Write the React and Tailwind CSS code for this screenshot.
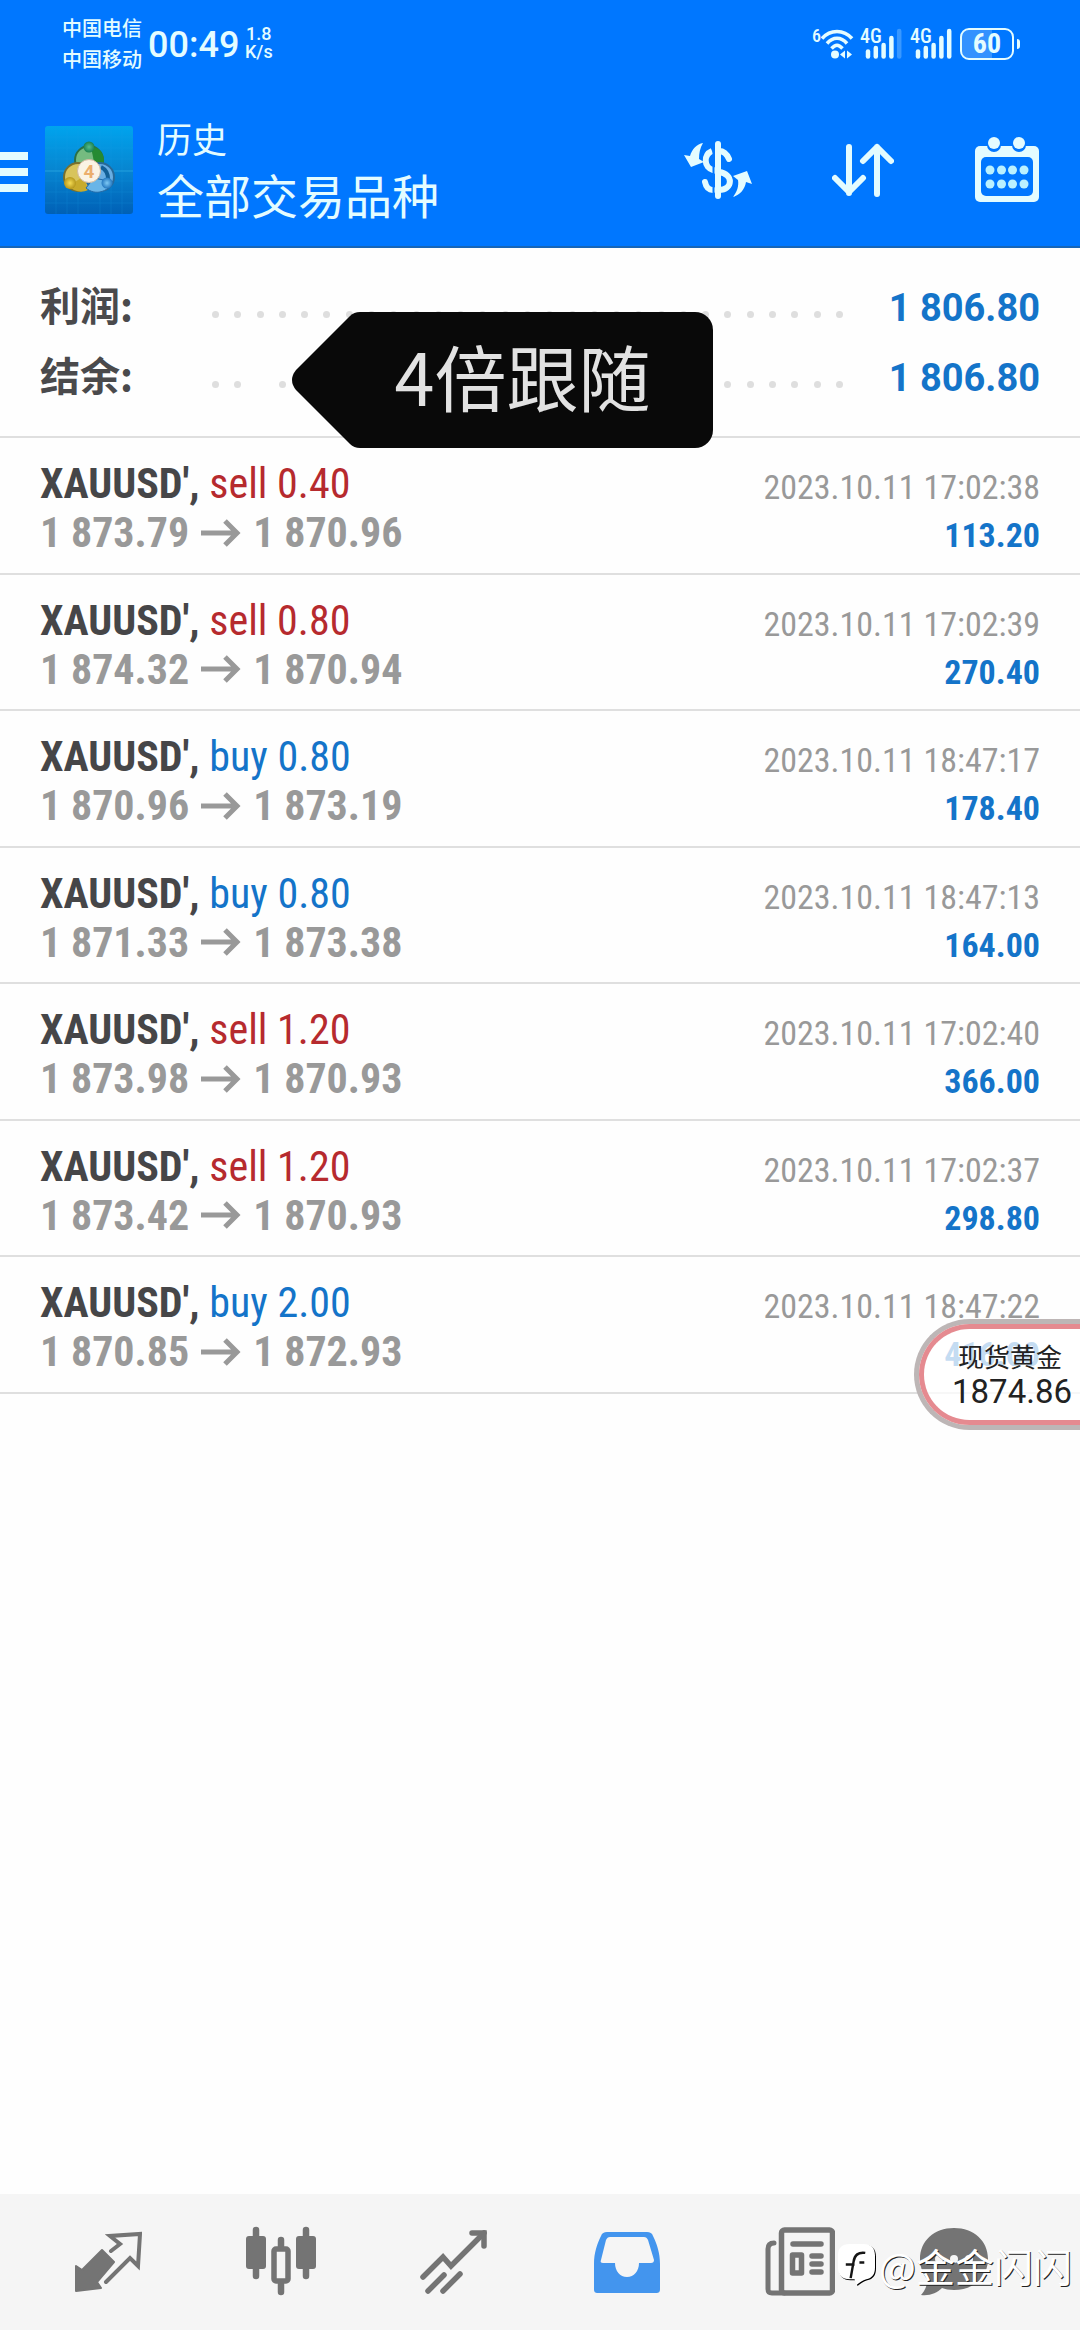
import React, { useState } from 'react';

const orders = [
  { id: 1, symbol: "XAUUSD'", type: 'sell', volume: '0.40', open: '1 873.79', close: '1 870.96', time: '2023.10.11 17:02:38', profit: '113.20' },
  { id: 2, symbol: "XAUUSD'", type: 'sell', volume: '0.80', open: '1 874.32', close: '1 870.94', time: '2023.10.11 17:02:39', profit: '270.40' },
  { id: 3, symbol: "XAUUSD'", type: 'buy', volume: '0.80', open: '1 870.96', close: '1 873.19', time: '2023.10.11 18:47:17', profit: '178.40' },
  { id: 4, symbol: "XAUUSD'", type: 'buy', volume: '0.80', open: '1 871.33', close: '1 873.38', time: '2023.10.11 18:47:13', profit: '164.00' },
  { id: 5, symbol: "XAUUSD'", type: 'sell', volume: '1.20', open: '1 873.98', close: '1 870.93', time: '2023.10.11 17:02:40', profit: '366.00' },
  { id: 6, symbol: "XAUUSD'", type: 'sell', volume: '1.20', open: '1 873.42', close: '1 870.93', time: '2023.10.11 17:02:37', profit: '298.80' },
  { id: 7, symbol: "XAUUSD'", type: 'buy', volume: '2.00', open: '1 870.85', close: '1 872.93', time: '2023.10.11 18:47:22', profit: '416.00' },
];

const WifiIcon = () => (
  <svg width="33" height="32" viewBox="0 0 33 32" fill="none" stroke="currentColor" strokeWidth="3.5">
    <path d="M1 10.5C9 1 23 1 31 10.5" />
    <path d="M6 15.5c6-7 14-7 20 0" />
    <path d="M10.500 20.500c4-4.500 7-4.500 11 0" />
    <circle cx="14" cy="26.500" r="4" fill="currentColor" stroke="none" />
    <path d="M24 22.500v8l-5-4zM26 22.500v8l5-4z" fill="currentColor" stroke="none" />
  </svg>
);

const SignalIcon = ({ level }) => (
  <div className="relative w-[42px] h-8">
    <span className="absolute left-0 top-0 text-[20px] leading-4 font-['Roboto_Condensed',sans-serif] font-medium">4G</span>
    <svg className="w-full h-full" viewBox="0 0 42 32" stroke="currentColor" strokeWidth="4.500" strokeLinecap="round">
      {[23.500, 20, 17, 10, 3].map((y, i) => (
        <path key={y} d={`M${8 + i * 7.800} 28.500V${y}`} opacity={i < level ? 1 : 0.25} />
      ))}
    </svg>
  </div>
);

const BatteryIcon = () => (
  <div className="flex items-center">
    <div className="relative flex items-center justify-center w-[54px] h-8 border-2 border-current rounded-[9px] overflow-hidden">
      <div className="absolute left-0 inset-y-0 w-3/5 bg-white/20" />
      <span className="relative text-[28px] leading-none font-bold">60</span>
    </div>
    <div className="ml-[3px] w-[3px] h-[10px] rounded-r bg-current" />
  </div>
);

const AppLogo = () => (
  <svg width="88" height="88" viewBox="0 0 88 88">
    <defs>
      <linearGradient id="logoBg" x1="0" y1="0" x2="0" y2="1">
        <stop offset="0" stopColor="#00a4ee" />
        <stop offset="0.5" stopColor="#0785d0" />
        <stop offset="1" stopColor="#0060b6" />
      </linearGradient>
      <radialGradient id="logoGreen">
        <stop offset="0" stopColor="#58bd8c" />
        <stop offset="1" stopColor="#1b8050" />
      </radialGradient>
      <radialGradient id="logoGold">
        <stop offset="0" stopColor="#f5dc55" />
        <stop offset="1" stopColor="#b5971c" />
      </radialGradient>
      <radialGradient id="logoBlue">
        <stop offset="0" stopColor="#7ec9f5" />
        <stop offset="1" stopColor="#2478c0" />
      </radialGradient>
    </defs>
    <rect width="88" height="88" rx="3" fill="url(#logoBg)" />
    <path d="M0 11h88M0 22h88M0 33h88M0 55h88M0 66h88M0 77h88M11 0v88M22 0v88M33 0v88M55 0v88M66 0v88M77 0v88" stroke="#1a9ee4" strokeWidth="0.500" opacity="0.400" />
    <path d="M0 45h88" stroke="#39b4e8" opacity="0.600" />
    <circle cx="44" cy="34" r="14" fill="#75bb80" stroke="#2b7047" strokeWidth="2" />
    <path d="M46 21c10 0 15 9 12 20l-8 0z" fill="#258a32" />
    <circle cx="33" cy="51" r="14" fill="#d8c45c" stroke="#79702e" strokeWidth="2" />
    <path d="M24 60l15-10 4 14c-6 3-14 2-19-4z" fill="#c8ab2c" />
    <circle cx="55" cy="51" r="14" fill="#69aee3" stroke="#286998" strokeWidth="2" />
    <path d="M41 62l8-10 19 4c-5 10-18 14-27 6z" fill="#69b5e8" stroke="#246aa8" />
    <path d="M56 41c4 2 7 6 7 12" fill="none" stroke="#125f96" strokeWidth="4" />
    <circle cx="44" cy="21" r="5.500" fill="url(#logoGreen)" />
    <circle cx="25" cy="57" r="6" fill="url(#logoGold)" />
    <circle cx="62" cy="57" r="5.500" fill="url(#logoBlue)" />
    <circle cx="44" cy="45" r="11.500" fill="#faf3e4" stroke="#d1b9a0" />
    <text x="44" y="52" textAnchor="middle" fontSize="19" fontWeight="700" fontFamily="Roboto, sans-serif" fill="#ebae6c">4</text>
  </svg>
);

const DollarIcon = () => (
  <svg width="68" height="60" viewBox="0 0 68 60" fill="none" stroke="currentColor">
    <path d="M34 4v52" strokeWidth="6" strokeLinecap="round" />
    <path d="M45 19C42 12 38 11 35 11" strokeWidth="6" strokeLinecap="round" />
    <path d="M28 11c-9 4-8 17 1 19l6 2c15 2 14 18 0 18" strokeWidth="6" />
    <path d="M21 42c1 5 4 8 8 8" strokeWidth="6" strokeLinecap="round" />
    <path d="M29.500 5v50" stroke="#0077ff" strokeWidth="2" />
    <path d="M19 3C13 4 8 9 6 16L0 15l7 12 13-5-5-3c0-6 1-11 4-16z" fill="currentColor" stroke="none" />
    <path d="M49 57c7-2 12-8 13-15l6 2-5-13-14 5 5 4c1 6-1 12-5 17z" fill="currentColor" stroke="none" />
  </svg>
);

const SortIcon = () => (
  <svg width="62" height="54" viewBox="0 0 62 54" fill="none" stroke="currentColor" strokeWidth="6" strokeLinecap="round" strokeLinejoin="round">
    <path d="M17 4v46M3 35l14 14 14-14" />
    <path d="M45 51V4M31 18L45 4l14 14" />
  </svg>
);

const CalendarIcon = () => (
  <svg width="66" height="66" viewBox="0 0 66 66">
    <rect x="1" y="9" width="64" height="56" rx="5" fill="currentColor" />
    <rect x="7" y="20" width="52" height="39" rx="5" fill="#0077ff" />
    <path d="M13 6v2a7 7 0 0 0 14 0V6zM38 6v2a7 7 0 0 0 14 0V6z" fill="#0077ff" />
    <circle cx="20" cy="6" r="6" fill="currentColor" />
    <circle cx="45" cy="6" r="6" fill="currentColor" />
    {[16, 27.500, 38.500, 50].map((x) => (
      <g key={x} fill="#baf1ff">
        <circle cx={x} cy="33" r="4.500" />
        <circle cx={x} cy="47" r="4.500" />
      </g>
    ))}
  </svg>
);

const QuotesIcon = () => (
  <svg width="68" height="70" viewBox="0 0 68 70" fill="none" stroke="currentColor">
    <path d="M28 24l12 12-17 20 4 6-25 3V40l6 4z" fill="currentColor" strokeWidth="2" strokeLinejoin="round" />
    <path d="M37 25l9-7-10-8 30-2-2 32-8-8-24 24" strokeWidth="4" strokeLinecap="round" />
  </svg>
);

const ChartIcon = () => (
  <svg width="70" height="70" viewBox="0 0 70 70" fill="none" stroke="currentColor">
    <path d="M10 4v46M35 14v10M35 56v10M60 4v46" strokeWidth="6.500" strokeLinecap="round" />
    <rect x="0" y="10" width="20" height="33" rx="3" fill="currentColor" stroke="none" />
    <rect x="50" y="10" width="20" height="33" rx="3" fill="currentColor" stroke="none" />
    <rect x="28" y="23" width="14" height="32" rx="2" fill="#f5f5f5" strokeWidth="5.500" />
  </svg>
);

const TradeIcon = () => (
  <svg width="68" height="70" viewBox="0 0 68 70" fill="none" stroke="currentColor" strokeWidth="5.500" strokeLinecap="round">
    <path d="M3 51l20-20 8 9L64 7" />
    <path d="M52 7h12v13" />
    <path d="M8 65l16-16M23 65l17-17" />
  </svg>
);

const HistoryIcon = () => (
  <svg width="68" height="70" viewBox="0 0 68 70">
    <path d="M14 6h40c3 0 5 1 6 4 4 8 7 17 7 28v25c0 3-1 4-4 4H5c-3 0-4-1-4-4V38c0-11 3-20 7-28 1-3 3-4 6-4z" fill="currentColor" />
    <path d="M17 11h34c2 0 3 1 4 3l6 20c0 2-1 3-3 3H46c0 8-5 14-12 14s-12-6-12-14H10c-2 0-3-1-2-3l5-20c1-2 2-3 4-3z" fill="#f5f5f5" />
  </svg>
);

const NewsIcon = () => (
  <svg width="70" height="70" viewBox="0 0 70 70" fill="none" stroke="currentColor" strokeLinecap="round">
    <rect x="16.500" y="4" width="51" height="63" rx="3" strokeWidth="5.500" />
    <path d="M9 17c-4 0-6 2-6 6v40c0 3 1 4 4 4h12" strokeWidth="5" />
    <path d="M28 18h28M47 30h9M47 38h9M47 46h9" strokeWidth="5.500" />
    <rect x="27.500" y="29" width="9" height="18" strokeWidth="5.500" strokeLinejoin="round" />
  </svg>
);

const ChatIcon = () => (
  <svg width="70" height="70" viewBox="0 0 70 70">
    <path d="M35 2c20 0 34 13 34 31S55 64 35 64c-5 0-9-1-12-2-5 5-12 8-21 7 3-3 6-9 7-15C4 49 1 41 1 33 1 15 15 2 35 2z" fill="currentColor" />
    <circle cx="20" cy="33" r="4" fill="#f5f5f5" />
    <circle cx="35" cy="33" r="4" fill="#f5f5f5" />
    <circle cx="50" cy="33" r="4" fill="#f5f5f5" />
  </svg>
);

const tabs = [
  { id: 'quotes', label: 'Quotes', Icon: QuotesIcon },
  { id: 'chart', label: 'Chart', Icon: ChartIcon },
  { id: 'trade', label: 'Trade', Icon: TradeIcon },
  { id: 'history', label: 'History', Icon: HistoryIcon },
  { id: 'news', label: 'News', Icon: NewsIcon },
  { id: 'chat', label: 'Chat', Icon: ChatIcon },
];

const StatusBar = () => (
  <div className="flex items-start justify-between pl-[62px] pr-[60px] pt-3">
    <div className="flex items-center">
      <div className="text-[20px] leading-[31px] font-medium">
        <div>中国电信</div>
        <div>中国移动</div>
      </div>
      <span className="ml-1.5 w-[97px] pt-1 text-[36px] leading-none font-medium font-['Roboto',sans-serif]">00:49</span>
      <div className="text-[18px] leading-[18px] text-center font-medium font-['Roboto',sans-serif]">
        <div>1.8</div>
        <div>K/s</div>
      </div>
    </div>
    <div className="flex items-start pt-4 font-['Roboto_Condensed',sans-serif]">
      <span className="text-[18px] leading-4 font-medium">6</span>
      <WifiIcon />
      <div className="flex ml-1.5 mr-2 gap-2">
        <SignalIcon level={4} />
        <SignalIcon level={5} />
      </div>
      <BatteryIcon />
    </div>
  </div>
);

const SummaryRow = ({ label, value, hidden }) => (
  <div className="flex items-center h-[70px]">
    <dt className="w-[172px] pb-1.5 text-[40px] leading-[60px] font-bold text-[#4a4a4c]">{label}</dt>
    <div className="flex-1 flex justify-between pt-3.5" aria-hidden="true">
      {Array.from({ length: 29 }, (_, i) => (
        <span key={i} className={hidden === i ? 'size-[7px]' : 'size-[7px] rounded-full bg-[#dedede]'} />
      ))}
    </div>
    <dd className="w-[197px] pt-0.5 text-right text-[38px] font-bold text-[#1474c9] font-['Roboto',sans-serif]">{value}</dd>
  </div>
);

const OrderRow = ({ order }) => (
  <li className="flex justify-between px-10 pt-[21px] border-b-2 border-[#dfdfdf]">
    <div className="text-[42px] leading-[49px] whitespace-nowrap">
      <div className="font-bold text-[#464648]">
        {order.symbol},{' '}
        <span className={order.type === 'sell' ? 'font-normal text-[#b62a2e]' : 'font-normal text-[#1474c9]'}>
          {order.type} {order.volume}
        </span>
      </div>
      <div className="flex items-center font-bold text-[#999999]">
        {order.open}
        <svg className="mx-3" width="40" height="28" viewBox="0 0 40 28" fill="none" stroke="currentColor" strokeWidth="5">
          <path d="M0 14h36M24 2l12 12-12 12" />
        </svg>
        {order.close}
      </div>
    </div>
    <div className="pt-1 text-[34px] leading-[48px] text-right whitespace-nowrap">
      <div className="text-[#999999]">{order.time}</div>
      <div className="font-bold text-[#1474c9]">{order.profit}</div>
    </div>
  </li>
);

const App = () => {
  const [tab, setTab] = useState('history');

  return (
    <div className="relative min-h-screen flex flex-col bg-[#fefefe] font-['Noto_Sans_CJK_SC',sans-serif]">
      <header className="h-[248px] flex flex-col bg-[#0077ff] text-[#e4fcff] border-b-2 border-[#1766b8]">
        <StatusBar />
        <div className="flex-1 flex items-center pr-10 pt-5">
          <button type="button" aria-label="Menu" className="flex flex-col gap-2 w-7 pt-1">
            <span className="h-2 bg-current" />
            <span className="h-2 bg-current" />
            <span className="h-2 bg-current" />
          </button>
          <div className="ml-[17px] mr-6">
            <AppLogo />
          </div>
          <div className="flex-1 pb-1.5">
            <p className="text-[35px] leading-[54px]">历史</p>
            <h1 className="text-[47px] leading-[58px]">全部交易品种</h1>
          </div>
          <div className="flex items-center gap-20">
            <button type="button" aria-label="Symbols"><DollarIcon /></button>
            <button type="button" aria-label="Sort"><SortIcon /></button>
            <button type="button" aria-label="Period"><CalendarIcon /></button>
          </div>
        </div>
      </header>

      <main className="flex-1">
        <section className="relative px-10 pt-6 pb-6 border-b-2 border-[#dfdfdf]">
          <dl>
            <SummaryRow label="利润:" value="1 806.80" />
            <SummaryRow label="结余:" value="1 806.80" hidden={2} />
          </dl>
          <div className="absolute left-[292px] top-16 w-[421px] h-[136px] pl-10 pb-2.5 flex items-center justify-center">
            <svg className="absolute inset-0" width="421" height="136" viewBox="0 0 421 136">
              <path d="M68 0H403a18 18 0 0 1 18 18V118a18 18 0 0 1-18 18H68q-6 0-10-4L4 78q-8-10 0-20L58 4q4-4 10-4z" fill="#090909" />
            </svg>
            <span className="relative text-[72px] leading-none text-[#e2e2e2]">4倍跟随</span>
          </div>
        </section>

        <ul className="grid auto-rows-fr min-h-[956px] font-['Roboto_Condensed',sans-serif]">
          {orders.map((order) => (
            <OrderRow key={order.id} order={order} />
          ))}
        </ul>
      </main>

      {/* floating quote */}
      <div className="absolute right-0 top-[1319px] w-[166px] h-[111px] rounded-l-full border-y-[5px] border-l-[5px] border-[#bdb6b6]">
        <div className="h-full pl-5 rounded-l-full border-y-[5px] border-l-[5px] border-[#e58a90] bg-white/75 flex flex-col justify-center text-[#222222]">
          <span className="text-[26px] leading-[34px] text-center pr-1">现货黄金</span>
          <span className="text-[33px] leading-[38px] text-center font-['Roboto',sans-serif]">1874.86</span>
        </div>
      </div>

      <nav className="relative flex h-[136px] pl-[22px] pr-[58px] bg-[#f5f5f5]">
        {tabs.map(({ id, label, Icon }) => (
          <button
            key={id}
            type="button"
            aria-label={label}
            onClick={() => setTab(id)}
            className={`${id === 'chat' ? 'w-[136px]' : 'flex-1'} flex items-center justify-center pb-0.5 ${tab === id ? 'text-[#4395ee]' : 'text-[#747474]'}`}
          >
            <Icon />
          </button>
        ))}
        <div className="absolute right-2 bottom-[42px] flex items-center gap-1 text-white pointer-events-none">
          <svg className="drop-shadow-[1px_1px_0_#000000]" width="37" height="43" viewBox="0 0 38 44">
            <path d="M12 0h14c8 0 12 4 12 12v12c0 7-3 11-9 12-4 1-6 3-10 6l-2-6h-5C4 36 0 32 0 24V12C0 4 4 0 12 0z" fill="currentColor" />
            <path d="M28 9c-7-1-11 2-12 9l-3 17M8 21h9M22 19h5" fill="none" stroke="#151515" strokeWidth="2.500" />
          </svg>
          <span className="text-[39px] leading-[46px] [text-shadow:1px_1px_0_#222222]">@金金闪闪</span>
        </div>
      </nav>
    </div>
  );
};

export default App;
